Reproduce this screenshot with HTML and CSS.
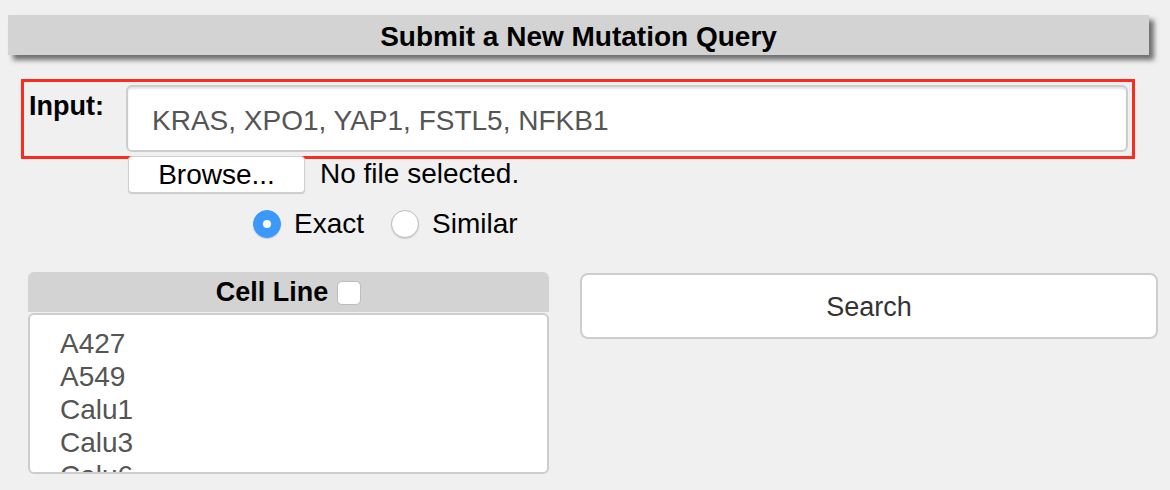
FILE: index.html
```html
<!DOCTYPE html>
<html>
<head>
<meta charset="utf-8">
<link rel="stylesheet" href="styles.css">
</head>
<body>
<div class="page">
  <div class="header">Submit a New Mutation Query</div>
  <div class="input-box">
    <div class="input-label">Input:</div>
    <div class="text-input">KRAS, XPO1, YAP1, FSTL5, NFKB1</div>
  </div>
  <div class="file-row">
    <div class="browse-btn">Browse...</div>
    <div class="file-status">No file selected.</div>
  </div>
  <div class="radio-row">
    <span class="radio checked"></span><span class="radio-label">Exact</span>
    <span class="radio"></span><span class="radio-label">Similar</span>
  </div>
  <div class="bottom">
    <div class="cell-panel">
      <div class="cell-head"><span>Cell Line</span><span class="checkbox"></span></div>
      <div class="cell-list">
        <div class="cell-item">A427</div>
        <div class="cell-item">A549</div>
        <div class="cell-item">Calu1</div>
        <div class="cell-item">Calu3</div>
        <div class="cell-item">Calu6</div>
      </div>
    </div>
    <div class="search-btn">Search</div>
  </div>
</div>
</body>
</html>
```
FILE: styles.css
```css
html, body {
  margin: 0;
  padding: 0;
  background: #f0f0f0;
  font-family: "Liberation Sans", Arial, sans-serif;
  color: #000;
}
.page {
  width: 1170px;
  height: 490px;
  overflow: hidden;
  padding-top: 15px;
  box-sizing: border-box;
}
.header {
  margin-left: 8px;
  width: 1141px;
  height: 40px;
  background: #d3d3d3;
  box-shadow: 5px 5px 5px #6f6f6f;
  font-weight: bold;
  font-size: 28px;
  line-height: 44px;
  text-align: center;
}
.input-box {
  margin-top: 24px;
  margin-left: 21px;
  width: 1114px;
  height: 80px;
  box-sizing: border-box;
  border: 3px solid #fb2b20;
  display: flex;
  align-items: flex-start;
  padding: 3px 4px 0 5px;
}
.input-label {
  font-weight: bold;
  font-size: 27px;
  width: 97px;
  padding-top: 6px;
}
.text-input {
  width: 1002px;
  height: 67px;
  box-sizing: border-box;
  background: #fff;
  border: 2px solid #cdcdcd;
  border-radius: 6px;
  box-shadow: inset 0 2px 2px #e4e4e4;
  font-size: 28px;
  color: #555;
  line-height: 68px;
  padding-left: 24px;
}
.file-row {
  display: flex;
  align-items: center;
  margin-left: 128px;
  margin-top: -4px;
  height: 38px;
}
.browse-btn {
  width: 177px;
  height: 37px;
  box-sizing: border-box;
  background: #fff;
  border: 1px solid #cfcfcf;
  border-radius: 4px;
  box-shadow: 0 1px 1px #c8c8c8;
  font-size: 28px;
  line-height: 35px;
  text-align: center;
}
.file-status {
  font-size: 28px;
  margin-left: 15px;
}
.radio-row {
  display: flex;
  align-items: center;
  margin-left: 253px;
  margin-top: 17px;
  height: 28px;
}
.radio {
  width: 28px;
  height: 28px;
  box-sizing: border-box;
  border-radius: 50%;
  background: #fff;
  border: 1px solid #bdbdbd;
  box-shadow: 0 1px 1px #cfcfcf;
  position: relative;
}
.radio.checked {
  background: #3b99fc;
  border-color: #3b99fc;
}
.radio.checked::after {
  content: "";
  position: absolute;
  left: 9px;
  top: 9px;
  width: 8px;
  height: 8px;
  border-radius: 50%;
  background: #fff;
}
.radio-label {
  font-size: 28px;
  margin-left: 13px;
  margin-right: 27px;
}
.bottom {
  display: flex;
  align-items: flex-start;
  margin-top: 34px;
  margin-left: 28px;
}
.cell-panel {
  width: 521px;
}
.cell-head {
  height: 40px;
  background: #d3d3d3;
  border-radius: 6px 6px 0 0;
  display: flex;
  align-items: center;
  justify-content: center;
  font-weight: bold;
  font-size: 27px;
}
.checkbox {
  width: 24px;
  height: 24px;
  box-sizing: border-box;
  background: #fff;
  border: 1px solid #bdbdbd;
  border-radius: 5px;
  margin-left: 9px;
  margin-top: 2px;
}
.cell-list {
  margin-top: 1px;
  height: 161px;
  box-sizing: border-box;
  background: #fff;
  border: 2px solid #cdcdcd;
  border-radius: 6px;
  overflow: hidden;
  padding: 12px 0 0 30px;
}
.cell-item {
  font-size: 28px;
  color: #555;
  line-height: 33px;
}
.search-btn {
  margin-left: 31px;
  margin-top: 1px;
  width: 578px;
  height: 66px;
  box-sizing: border-box;
  background: #fff;
  border: 2px solid #cdcdcd;
  border-radius: 8px;
  font-size: 27px;
  color: #333;
  line-height: 64px;
  text-align: center;
}
```
